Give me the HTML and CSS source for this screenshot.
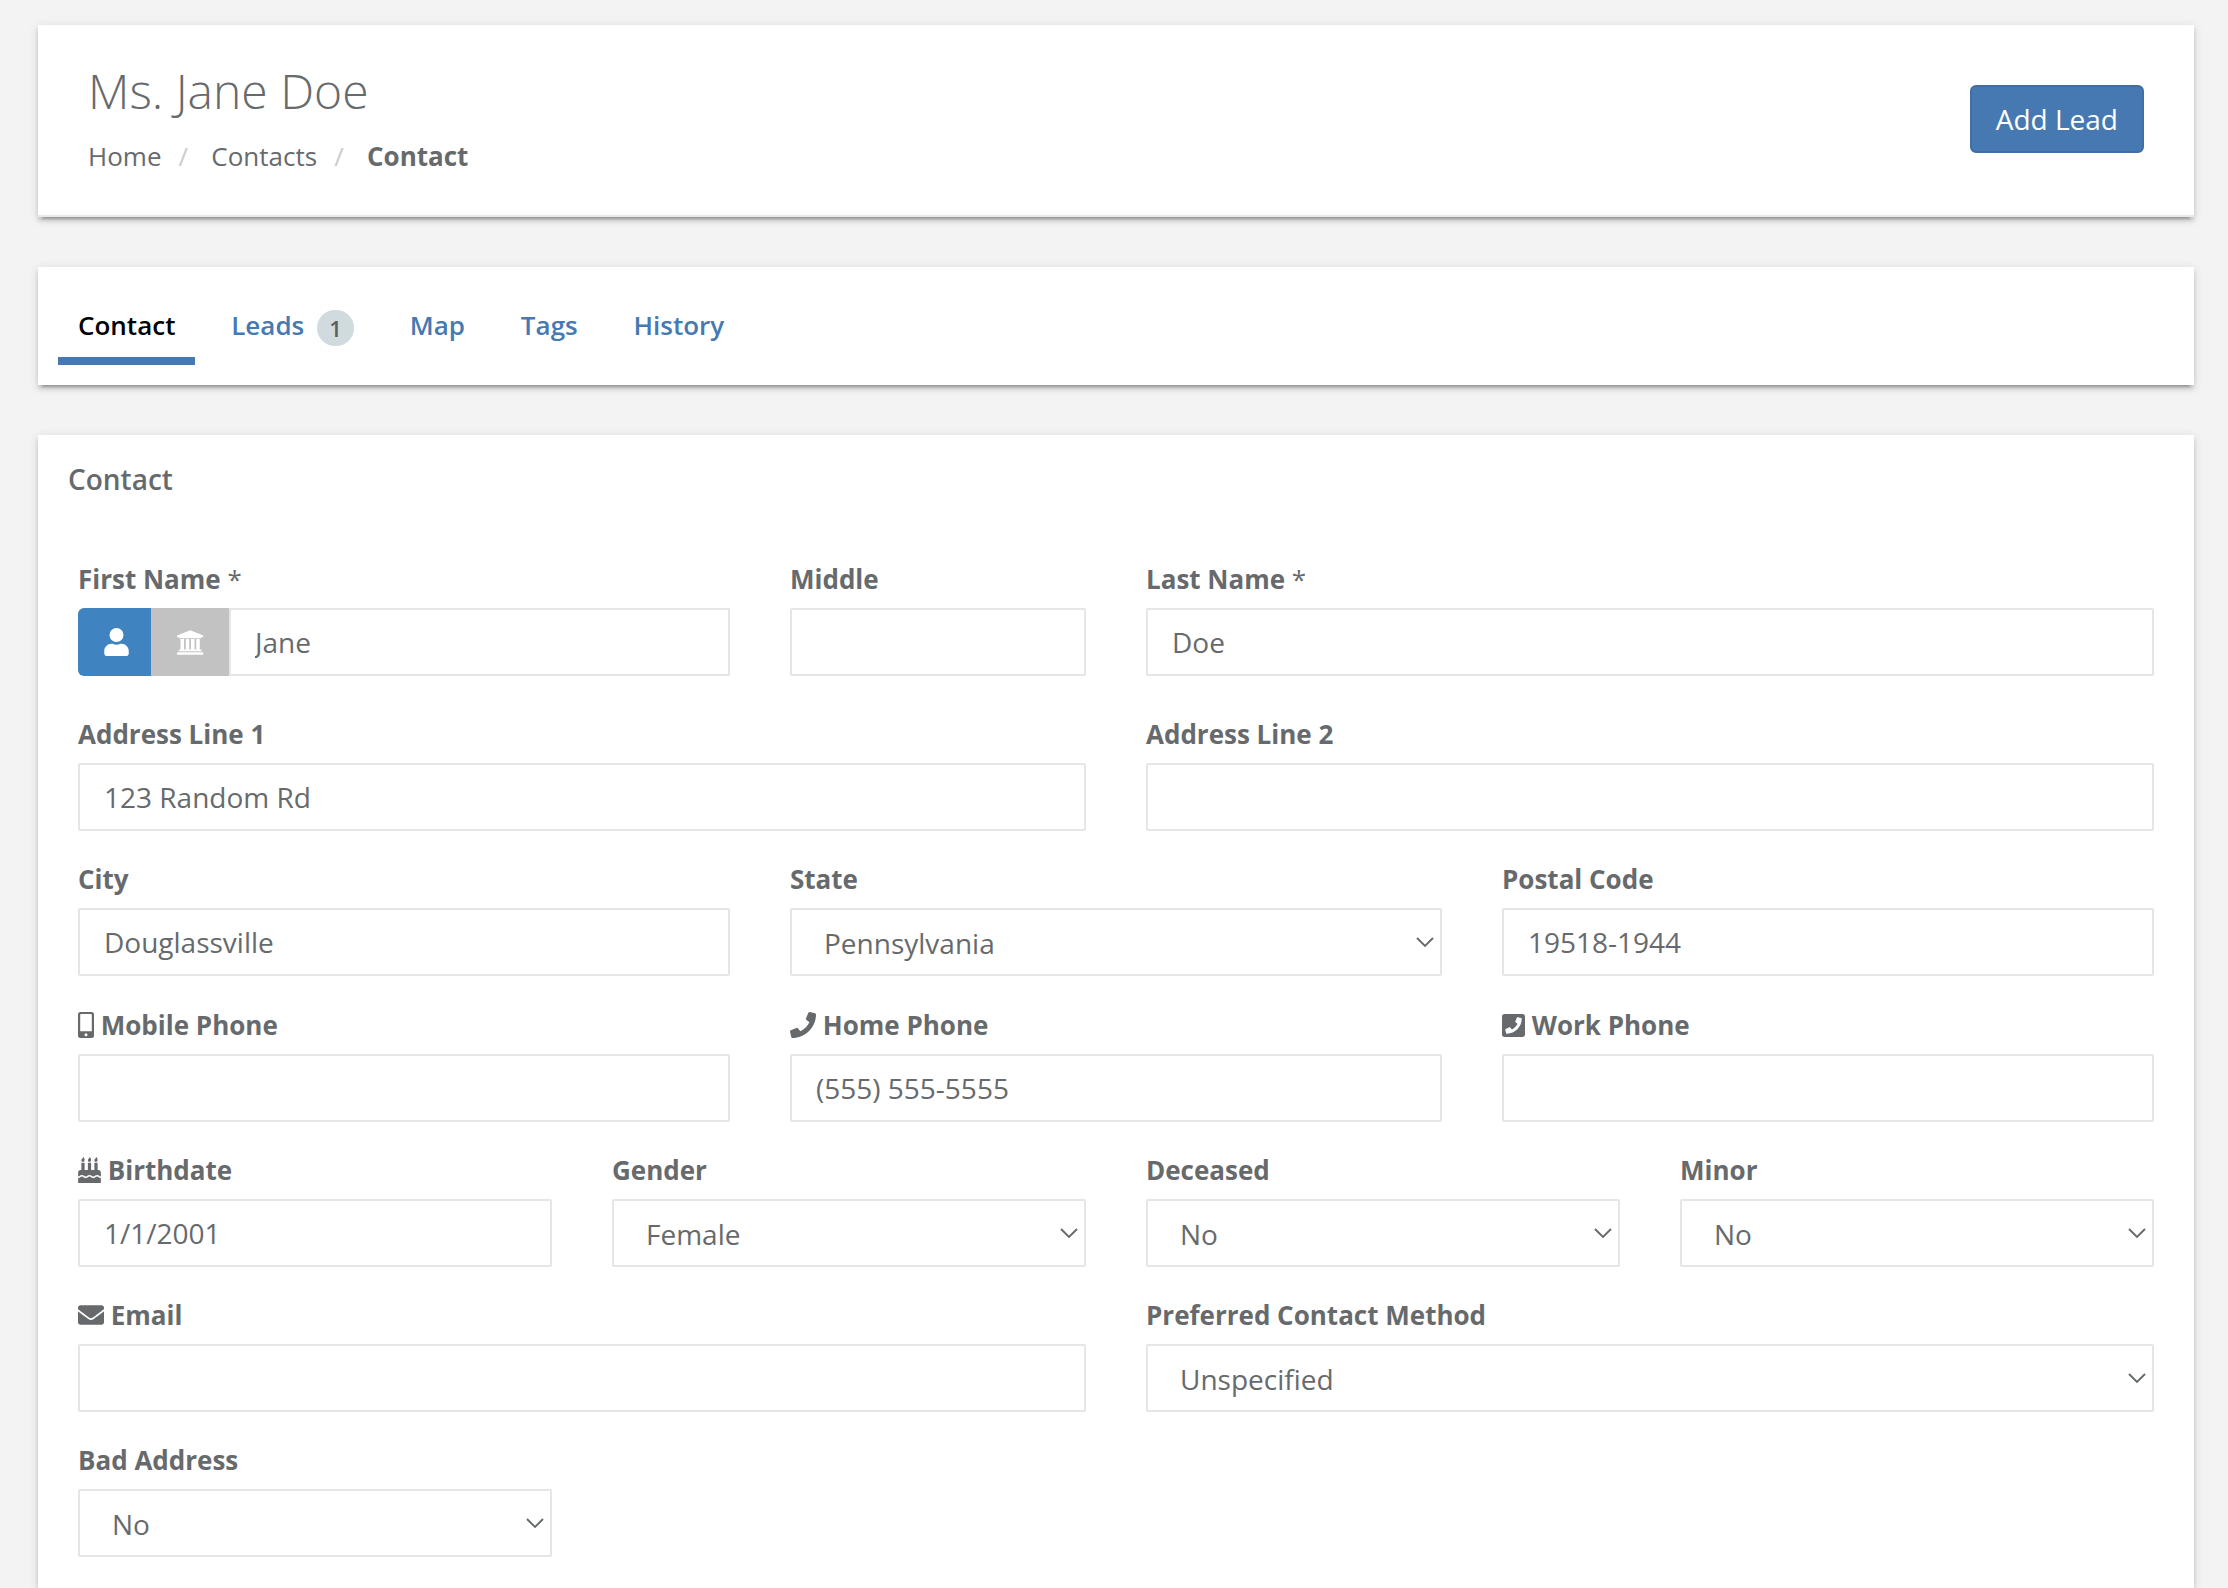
FILE: index.html
```html
<!DOCTYPE html>
<html lang="en">
<head>
    <meta charset="UTF-8">
    <meta name="viewport" content="width=device-width, initial-scale=1.0">
    <title>Ms. Jane Doe</title>
    <link rel="stylesheet" href="styles.css">
</head>
<body>
    <header class="card page-heading">
        <div>
            <h2>Ms. Jane Doe</h2>
            <ol class="breadcrumb">
                <li><a href="#">Home</a></li>
                <li><a href="#">Contacts</a></li>
                <li class="active"><strong>Contact</strong></li>
            </ol>
        </div>
        <button type="button" class="btn-primary">Add Lead</button>
    </header>

    <nav class="card tabs">
        <a href="#" class="tab active">Contact</a>
        <a href="#" class="tab">Leads <span class="badge">1</span></a>
        <a href="#" class="tab">Map</a>
        <a href="#" class="tab">Tags</a>
        <a href="#" class="tab">History</a>
    </nav>

    <main class="card content">
        <h5>Contact</h5>
        <form class="form">
            <div class="field col-4 first-row">
                <label for="first">First Name <span class="required">*</span></label>
                <div class="input-group">
                    <button type="button" class="type-btn person">
                        <svg class="icon-user" viewBox="0 0 448 512"><path d="M224 256a128 128 0 1 0 0-256 128 128 0 0 0 0 256zm90 32h-17a174 174 0 0 1-146 0h-17C60 288 0 348 0 422v42c0 27 21 48 48 48h352c27 0 48-21 48-48v-42c0-74-60-134-134-134z"/></svg>
                    </button>
                    <button type="button" class="type-btn company">
                        <svg class="icon-bank" viewBox="0 0 2048 1792"><path d="M960 0l960 384v128h-128q0 26-20.500 45t-48.500 19H197q-28 0-48.500-19T128 512H0V384zM256 640h256v768h128V640h256v768h128V640h256v768h128V640h256v768h59q28 0 48.500 19t20.500 45v64H128v-64q0-26 20.500-45t48.500-19h59V640zM1851 1600q28 0 48.500 19t20.500 45v128H0v-128q0-26 20.500-45t48.500-19h1782z"/></svg>
                    </button>
                    <input type="text" id="first" value="Jane">
                </div>
            </div>
            <div class="field col-2 first-row">
                <label for="middle">Middle</label>
                <input type="text" id="middle">
            </div>
            <div class="field col-6 first-row">
                <label for="last">Last Name <span class="required">*</span></label>
                <input type="text" id="last" value="Doe">
            </div>

            <div class="field col-6">
                <label for="address1">Address Line 1</label>
                <input type="text" id="address1" value="123 Random Rd">
            </div>
            <div class="field col-6">
                <label for="address2">Address Line 2</label>
                <input type="text" id="address2">
            </div>

            <div class="field col-4">
                <label for="city">City</label>
                <input type="text" id="city" value="Douglassville">
            </div>
            <div class="field col-4">
                <label for="state">State</label>
                <div class="select">
                    <select id="state"><option>Pennsylvania</option></select>
                    <svg class="chevron" viewBox="0 0 18 11"><path d="M1 1l8 8 8-8"/></svg>
                </div>
            </div>
            <div class="field col-4">
                <label for="postal">Postal Code</label>
                <input type="text" id="postal" value="19518-1944">
            </div>

            <div class="field col-4">
                <label for="mobile"><svg class="icon-mobile" viewBox="0 0 16 26"><path fill-rule="evenodd" d="M2.500 0h11A2.500 2.500 0 0 1 16 2.500v21a2.500 2.500 0 0 1-2.500 2.500h-11A2.500 2.500 0 0 1 0 23.500v-21A2.500 2.500 0 0 1 2.500 0zM3 2a.8.8 0 0 0-.8.800v16.400h11.600V2.800A.8.8 0 0 0 13 2zM8 21.200a1.500 1.500 0 1 0 0 3 1.500 1.500 0 0 0 0-3z"/></svg> Mobile Phone</label>
                <input type="text" id="mobile">
            </div>
            <div class="field col-4">
                <label for="home"><svg class="icon-phone" viewBox="0 0 512 512"><path d="M493.400 24.600l-104-24c-11.300-2.600-22.900 3.300-27.500 13.900l-48 112c-4.200 9.800-1.400 21.300 6.900 28l60.600 49.600c-36 76.700-98.900 140.500-177.200 177.200l-49.600-60.600c-6.800-8.300-18.200-11.100-28-6.900l-112 48C3.900 366.500-2 378.100.6 389.400l24 104C27.100 504.200 36.700 512 48 512c256.100 0 464-207.500 464-464 0-11.200-7.700-20.900-18.600-23.400z"/></svg> Home Phone</label>
                <input type="text" id="home" value="(555) 555-5555">
            </div>
            <div class="field col-4">
                <label for="work"><svg class="icon-square" viewBox="0 0 448 448"><path fill-rule="evenodd" d="M400 0H48C21.500 0 0 21.500 0 48v352c0 26.500 21.500 48 48 48h352c26.500 0 48-21.500 48-48V48c0-26.500-21.500-48-48-48zM94 384c-7 0-13.400-4.900-15-12L64.400 307c-1.600-7 2-14.300 8.700-17.200l70-30c6.100-2.600 13.300-.9 17.500 4.300l31 37.900c48.900-22.900 88.300-62.900 110.700-110.700l-37.900-31c-5.200-4.200-6.900-11.400-4.300-17.500l30-70c2.900-6.700 10.100-10.300 17.200-8.700l65 15c6.800 1.600 11.600 7.600 11.700 14.900C384 254 254.200 384 94 384z"/></svg> Work Phone</label>
                <input type="text" id="work">
            </div>

            <div class="field col-3">
                <label for="birthdate"><svg class="icon-cake" viewBox="0 0 448 512"><path d="M448 384c-28 0-31.300-32-74.500-32-43 0-46.800 32-74.700 32-27.700 0-32-32-74.800-32-42.800 0-46.900 32-74.700 32s-31.800-32-74.800-32c-43.100 0-46.400 32-74.500 32v-80c0-26.500 21.500-48 48-48h16V112h64v144h64V112h64v144h64V112h64v144h16c26.500 0 48 21.500 48 48v80zm0 128H0v-96c43.400 0 46.800-32 74.500-32 28 0 31.800 32 74.800 32s46.800-32 74.700-32c27.700 0 32 32 74.800 32s46.900-32 74.700-32c27.800 0 31.100 32 74.500 32v96zM96 96c-17.700 0-32-14.300-32-32 0-31 32-23 32-64 12 0 32 29.500 32 56s-14.300 40-32 40zm128 0c-17.700 0-32-14.300-32-32 0-31 32-23 32-64 12 0 32 29.500 32 56s-14.300 40-32 40zm128 0c-17.700 0-32-14.300-32-32 0-31 32-23 32-64 12 0 32 29.500 32 56s-14.300 40-32 40z"/></svg> Birthdate</label>
                <input type="text" id="birthdate" value="1/1/2001">
            </div>
            <div class="field col-3">
                <label for="gender">Gender</label>
                <div class="select">
                    <select id="gender"><option>Female</option></select>
                    <svg class="chevron" viewBox="0 0 18 11"><path d="M1 1l8 8 8-8"/></svg>
                </div>
            </div>
            <div class="field col-3">
                <label for="deceased">Deceased</label>
                <div class="select">
                    <select id="deceased"><option>No</option></select>
                    <svg class="chevron" viewBox="0 0 18 11"><path d="M1 1l8 8 8-8"/></svg>
                </div>
            </div>
            <div class="field col-3">
                <label for="minor">Minor</label>
                <div class="select">
                    <select id="minor"><option>No</option></select>
                    <svg class="chevron" viewBox="0 0 18 11"><path d="M1 1l8 8 8-8"/></svg>
                </div>
            </div>

            <div class="field col-6">
                <label for="email"><svg class="icon-mail" viewBox="0 64 512 384"><path d="M502.300 190.800c3.900-3.100 9.700-.2 9.700 4.700V400c0 26.500-21.500 48-48 48H48c-26.500 0-48-21.500-48-48V195.600c0-5 5.700-7.800 9.700-4.700 22.400 17.400 52.100 39.500 154.100 113.600 21.100 15.400 56.700 47.800 92.200 47.600 35.700.3 72-32.800 92.300-47.600 102-74.100 131.600-96.300 154-113.700zM256 320c23.200.4 56.600-29.200 73.400-41.400 132.700-96.300 142.800-104.700 173.400-128.700 5.800-4.500 9.200-11.500 9.200-18.900v-19c0-26.500-21.500-48-48-48H48c-26.500 0-48 21.500-48 48v19c0 7.400 3.400 14.300 9.200 18.900 30.600 23.900 40.700 32.400 173.400 128.700 16.800 12.200 50.200 41.800 73.400 41.400z"/></svg> Email</label>
                <input type="text" id="email">
            </div>
            <div class="field col-6">
                <label for="method">Preferred Contact Method</label>
                <div class="select">
                    <select id="method"><option>Unspecified</option></select>
                    <svg class="chevron" viewBox="0 0 18 11"><path d="M1 1l8 8 8-8"/></svg>
                </div>
            </div>

            <div class="field col-3 last-row">
                <label for="bad">Bad Address</label>
                <div class="select">
                    <select id="bad"><option>No</option></select>
                    <svg class="chevron" viewBox="0 0 18 11"><path d="M1 1l8 8 8-8"/></svg>
                </div>
            </div>
        </form>
    </main>
</body>
</html>
```

FILE: styles.css
```css
* {
    box-sizing: border-box;
}
body {
    margin: 0;
    padding: 25px 34px 0 38px;
    font-family: "Open Sans", sans-serif;
    font-size: 26px;
    line-height: 37.14px;
    color: #676a6c;
    background-color: #f3f3f3;
}
a {
    color: inherit;
    text-decoration: none;
}
.card {
    background-color: #fff;
    margin-bottom: 50px;
    box-shadow: 0 4px 4px 0 rgba(0, 0, 0, 0.14), 0 6px 2px -4px rgba(0, 0, 0, 0.2), 0 2px 10px 0 rgba(0, 0, 0, 0.12);
}

/* heading */
.page-heading {
    display: flex;
    justify-content: space-between;
    align-items: flex-start;
    height: 192px;
    padding: 39px 50px 0;
    border-bottom: 2px solid #e7eaec;
}
.page-heading h2 {
    margin: 0;
    font-size: 48px;
    font-weight: 300;
    line-height: 53px;
}
.breadcrumb {
    display: flex;
    margin: 21px 0 0;
    padding: 0;
    list-style: none;
}
.breadcrumb li + li::before {
    content: "/";
    padding: 0 23.3px 0 17px;
    color: #ccc;
}
.btn-primary {
    height: 68px;
    margin-top: 21px;
    padding: 0 24px;
    border: 2px solid #406fa4;
    border-radius: 6px;
    font: 28px "Open Sans", sans-serif;
    color: #fff;
    background-color: #4679b2;
}

/* tabs */
.tabs {
    display: flex;
    height: 118px;
    padding: 20px;
}
.tab {
    height: 78px;
    padding: 20px 20px 0;
    margin-right: 15.8px;
    font-weight: 600;
    color: #4679b2;
}
.tab.active {
    color: #000;
    border-bottom: 8px solid #4679b2;
}
.badge {
    display: inline-block;
    min-width: 37px;
    height: 36px;
    margin-left: 6px;
    border-radius: 18px;
    font-size: 22px;
    line-height: 36px;
    text-align: center;
    vertical-align: -2px;
    color: #5e5e5e;
    background-color: #d1dade;
}

/* form */
.content {
    height: 1153px;
    margin-bottom: 0;
    padding: 25px 40px 0;
}
.content h5 {
    margin: 0 0 63px -10px;
    font-size: 28px;
    font-weight: 600;
    line-height: 38px;
}
.form {
    display: grid;
    grid-template-columns: repeat(12, 1fr);
    column-gap: 60px;
}
.field {
    height: 145.25px;
}
.first-row {
    height: 155px;
}
.last-row {
    height: 115px;
}
.col-2 {
    grid-column: span 2;
}
.col-3 {
    grid-column: span 3;
}
.col-4 {
    grid-column: span 4;
}
.col-6 {
    grid-column: span 6;
}
label {
    display: block;
    height: 37px;
    margin-bottom: 10px;
    font-weight: 700;
    white-space: nowrap;
}
label svg {
    fill: currentColor;
}
.required {
    font-weight: 400;
}
input,
select {
    display: block;
    width: 100%;
    height: 68px;
    padding: 0 24px;
    border: 2px solid #e5e6e7;
    border-radius: 2px;
    font: 28px "Open Sans", sans-serif;
    color: inherit;
    background-color: #fff;
}
.select {
    position: relative;
}
select {
    appearance: none;
    padding: 2px 32px 0;
}
.chevron {
    position: absolute;
    right: 8px;
    top: 29px;
    width: 18px;
    height: 11px;
    fill: none;
    stroke: currentColor;
    stroke-width: 1.9;
}
.input-group {
    display: flex;
}
.input-group input {
    flex: 1;
    min-width: 0;
    margin-left: -1px;
    padding-left: 24px;
    border-radius: 0;
}
.type-btn {
    display: flex;
    align-items: center;
    justify-content: center;
    height: 68px;
    padding: 0;
    border: 0;
}
.type-btn svg {
    fill: #fff;
}
.person {
    width: 73px;
    padding-left: 3px;
    border-radius: 6px 0 0 6px;
    background-color: #3f84c1;
}
.company {
    width: 79px;
    padding-left: 1px;
    background-color: #c2c2c2;
}

/* icons */
.icon-user {
    width: 25px;
    height: 28px;
}
.icon-bank {
    width: 28px;
    height: 25px;
}
.icon-mobile {
    width: 16px;
    height: 26px;
    vertical-align: -3px;
}
.icon-phone {
    width: 26px;
    height: 26px;
    vertical-align: -3px;
}
.icon-square {
    width: 23px;
    height: 23px;
    vertical-align: -2px;
}
.icon-cake {
    width: 23px;
    height: 26px;
    vertical-align: -3px;
}
.icon-mail {
    width: 26px;
    height: 20px;
    vertical-align: 0;
}
```
